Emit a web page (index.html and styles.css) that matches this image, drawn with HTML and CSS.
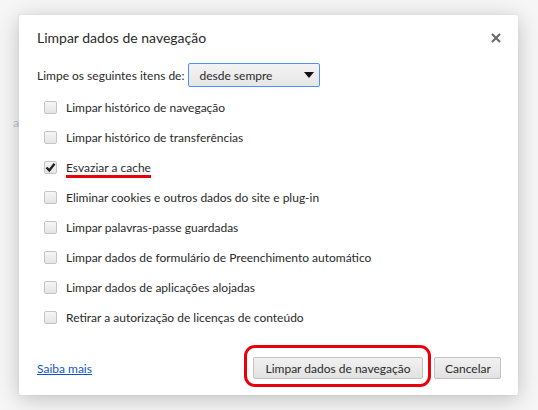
FILE: index.html
```html
<!DOCTYPE html>
<html lang="pt">
<head>
<meta charset="utf-8">
<link rel="stylesheet" href="styles.css">
</head>
<body>
<span class="bg-letter">a</span>
<div class="dialog">
  <div class="header">
    <h1 class="title">Limpar dados de navegação</h1>
    <svg class="close" width="10" height="10" viewBox="0 0 10 10"><path d="M1 1 L9 9 M9 1 L1 9" stroke="#6b6b6b" stroke-width="2.2"/></svg>
  </div>
  <div class="period">
    <span class="period-label">Limpe os seguintes itens de:</span>
    <div class="select">
      <span>desde sempre</span>
      <svg width="10" height="6" viewBox="0 0 10 6"><path d="M0 0 H10 L5 6 Z" fill="#111"/></svg>
    </div>
  </div>
  <ul class="options">
    <li class="option"><span class="box"></span><span class="label">Limpar histórico de navegação</span></li>
    <li class="option"><span class="box"></span><span class="label">Limpar histórico de transferências</span></li>
    <li class="option"><span class="box checked"><svg width="11" height="11" viewBox="0 0 11 11"><path d="M1.5 5.5 L4.3 8.5 L9.5 1.8" fill="none" stroke="#222" stroke-width="2.4"/></svg></span><span class="label marked">Esvaziar a cache</span></li>
    <li class="option"><span class="box"></span><span class="label">Eliminar cookies e outros dados do site e plug-in</span></li>
    <li class="option"><span class="box"></span><span class="label">Limpar palavras-passe guardadas</span></li>
    <li class="option"><span class="box"></span><span class="label">Limpar dados de formulário de Preenchimento automático</span></li>
    <li class="option"><span class="box"></span><span class="label">Limpar dados de aplicações alojadas</span></li>
    <li class="option"><span class="box"></span><span class="label">Retirar a autorização de licenças de conteúdo</span></li>
  </ul>
  <div class="footer">
    <a class="link" href="#">Saiba mais</a>
    <div class="buttons">
      <div class="highlight"><button class="btn wide">Limpar dados de navegação</button></div>
      <button class="btn narrow">Cancelar</button>
    </div>
  </div>
</div>
</body>
</html>
```
FILE: styles.css
```css
* { box-sizing: border-box; }
html, body { margin: 0; padding: 0; }
body {
  width: 538px;
  height: 410px;
  background: #f6f6f6;
  font-family: "Lato", "Open Sans", sans-serif;
  font-size: 12px;
  color: #2a2a2a;
  position: relative;
  overflow: hidden;
  padding: 15px 0 0 19px;
}
.bg-letter {
  position: absolute;
  left: 13px;
  top: 115px;
  color: #b8c4d8;
  font-size: 12px;
}
.dialog {
  position: relative;
  width: 499px;
  height: 380px;
  background: #fff;
  border-radius: 2px;
  box-shadow: 0 4px 22px rgba(0,0,0,0.22), 0 0 2px rgba(0,0,0,0.1);
  padding: 0 18px;
  display: flex;
  flex-direction: column;
}
.header {
  display: flex;
  align-items: center;
  justify-content: space-between;
  height: 44px;
  padding-top: 1px;
}
.title {
  margin: 0;
  font-size: 14px;
  font-weight: normal;
  color: #2a2a2a;
}
.close { margin-right: -1px; }
.period {
  display: flex;
  align-items: center;
  gap: 4px;
  margin-top: 4px;
}
.select {
  width: 132px;
  height: 24px;
  border: 1px solid #4d90fe;
  border-radius: 2px;
  background: linear-gradient(#f4f4f4, #e6e6e6);
  display: flex;
  align-items: center;
  justify-content: space-between;
  padding: 0 5px 0 10px;
}
.options {
  list-style: none;
  margin: 5px 0 0;
  padding: 0 0 0 7px;
}
.option {
  display: flex;
  align-items: center;
  height: 30px;
}
.box {
  width: 13px;
  height: 13px;
  border: 1px solid #c4c4c4;
  border-radius: 2px;
  background: linear-gradient(#f6f6f6, #e4e4e4);
  margin-right: 9px;
  display: flex;
  align-items: center;
  justify-content: center;
}
.marked {
  border-bottom: 3px solid #e8000b;
  margin-bottom: -3px;
}
.footer {
  margin-top: auto;
  height: 54px;
  display: flex;
  align-items: center;
  justify-content: space-between;
  margin-right: -1px;
}
.link {
  color: #15c;
  text-decoration: underline;
}
.buttons {
  display: flex;
  align-items: center;
  gap: 11px;
}
.highlight {
  position: relative;
}
.highlight::after {
  content: "";
  position: absolute;
  left: -9px; right: -8px; top: -12px; bottom: -8px;
  border: 3px solid #e8000b;
  border-radius: 11px;
}
.btn {
  font-family: inherit;
  font-size: 12px;
  color: #2a2a2a;
  height: 22px;
  padding: 0 10px;
  border: 1px solid #c3c3c3;
  border-radius: 2px;
  background: linear-gradient(#f1f1f1, #e2e2e2);
  white-space: nowrap;
}
.wide { width: 170px; }
.narrow { width: 67px; }
```
